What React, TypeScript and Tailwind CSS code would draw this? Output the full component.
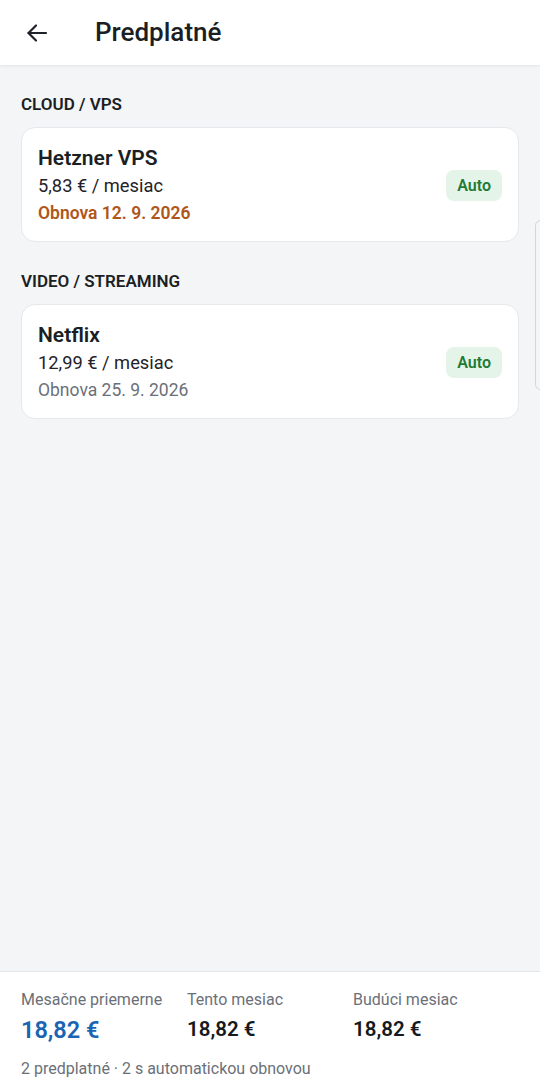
import React from "react";

type Subscription = {
  id: string;
  name: string;
  price: string;
  renewal: string;
  soon?: boolean;
};

type Group = {
  title: string;
  items: Subscription[];
};

const groups: Group[] = [
  {
    title: "CLOUD / VPS",
    items: [
      { id: "hetzner", name: "Hetzner VPS", price: "5,83 € / mesiac", renewal: "Obnova 12. 9. 2026", soon: true },
    ],
  },
  {
    title: "VIDEO / STREAMING",
    items: [{ id: "netflix", name: "Netflix", price: "12,99 € / mesiac", renewal: "Obnova 25. 9. 2026" }],
  },
];

const BackIcon = () => (
  <svg width="24" height="24" viewBox="0 0 24 24" fill="none" stroke="#1f2329" strokeWidth="2.2" strokeLinecap="round" strokeLinejoin="round">
    <path d="M21 12H3.5" />
    <path d="M11 4.5 3.5 12l7.5 7.5" />
  </svg>
);

const SubscriptionCard = ({ item }: { item: Subscription }) => (
  <div className="flex items-center justify-between rounded-[14px] border border-[#e6e8ec] bg-white pl-4 pr-4 pt-[16px] pb-[14px]">
    <div className="flex flex-col">
      <span className="text-[21px] font-semibold leading-[28px] text-[#1b1f24]">{item.name}</span>
      <span className="text-[18.3px] leading-[28px] text-[#1f2329]">{item.price}</span>
      <span
        className={
          item.soon
            ? "text-[17.5px] font-semibold leading-[27px] text-[#b0561a]"
            : "text-[17.5px] leading-[27px] text-[#6b7078]"
        }
      >
        {item.renewal}
      </span>
    </div>
    <span className="rounded-lg bg-[#e5f4e8] px-[11px] py-[5px] text-[16px] font-semibold leading-[21px] text-[#1e7a36]">
      Auto
    </span>
  </div>
);

export default function App() {
  return (
    <div
      className="relative flex h-[1089px] w-[540px] flex-col overflow-hidden bg-[#f4f5f7]"
      style={{ fontFamily: "Roboto, 'Noto Sans', sans-serif" }}
    >
      <header className="z-10 flex h-[65px] shrink-0 items-center gap-[46px] bg-white pl-[25px] shadow-[0_1px_3px_rgba(0,0,0,0.08)]">
        <BackIcon />
        <h1 className="text-[26px] font-medium text-[#1b1f24]">Predplatné</h1>
      </header>

      <main className="flex flex-1 flex-col px-[21px] pt-[27px]">
        {groups.map((group) => (
          <section key={group.title} className="mb-[27px] flex flex-col">
            <h2 className="mb-[11px] text-[17px] font-semibold leading-[24px] text-[#1b1f24]">{group.title}</h2>
            <div className="flex flex-col gap-3">
              {group.items.map((item) => (
                <SubscriptionCard key={item.id} item={item} />
              ))}
            </div>
          </section>
        ))}
      </main>

      {/* edge handle */}
      <div className="absolute right-[-6px] top-[220px] h-[170px] w-[11px] rounded-md border border-[#d4d6da] bg-[#f4f5f7]" />

      <footer className="flex shrink-0 flex-col border-t border-[#e3e5e8] bg-white px-[21px] pt-[16px] pb-[8px]">
        <div className="grid grid-cols-[166px_166px_1fr]">
          <div className="flex flex-col">
            <span className="text-[16px] leading-[24px] text-[#6b7078]">Mesačne priemerne</span>
            <span className="mt-[3px] text-[23.5px] font-semibold leading-[30px] text-[#1a64b4]">18,82 €</span>
          </div>
          <div className="flex flex-col">
            <span className="text-[16px] leading-[24px] text-[#6b7078]">Tento mesiac</span>
            <span className="mt-[3px] text-[20.5px] font-semibold leading-[28px] text-[#16191d]">18,82 €</span>
          </div>
          <div className="flex flex-col">
            <span className="text-[16px] leading-[24px] text-[#6b7078]">Budúci mesiac</span>
            <span className="mt-[3px] text-[20.5px] font-semibold leading-[28px] text-[#16191d]">18,82 €</span>
          </div>
        </div>
        <span className="mt-[12px] text-[16px] leading-[24px] text-[#6b7078]">2 predplatné · 2 s automatickou obnovou</span>
      </footer>
    </div>
  );
}
